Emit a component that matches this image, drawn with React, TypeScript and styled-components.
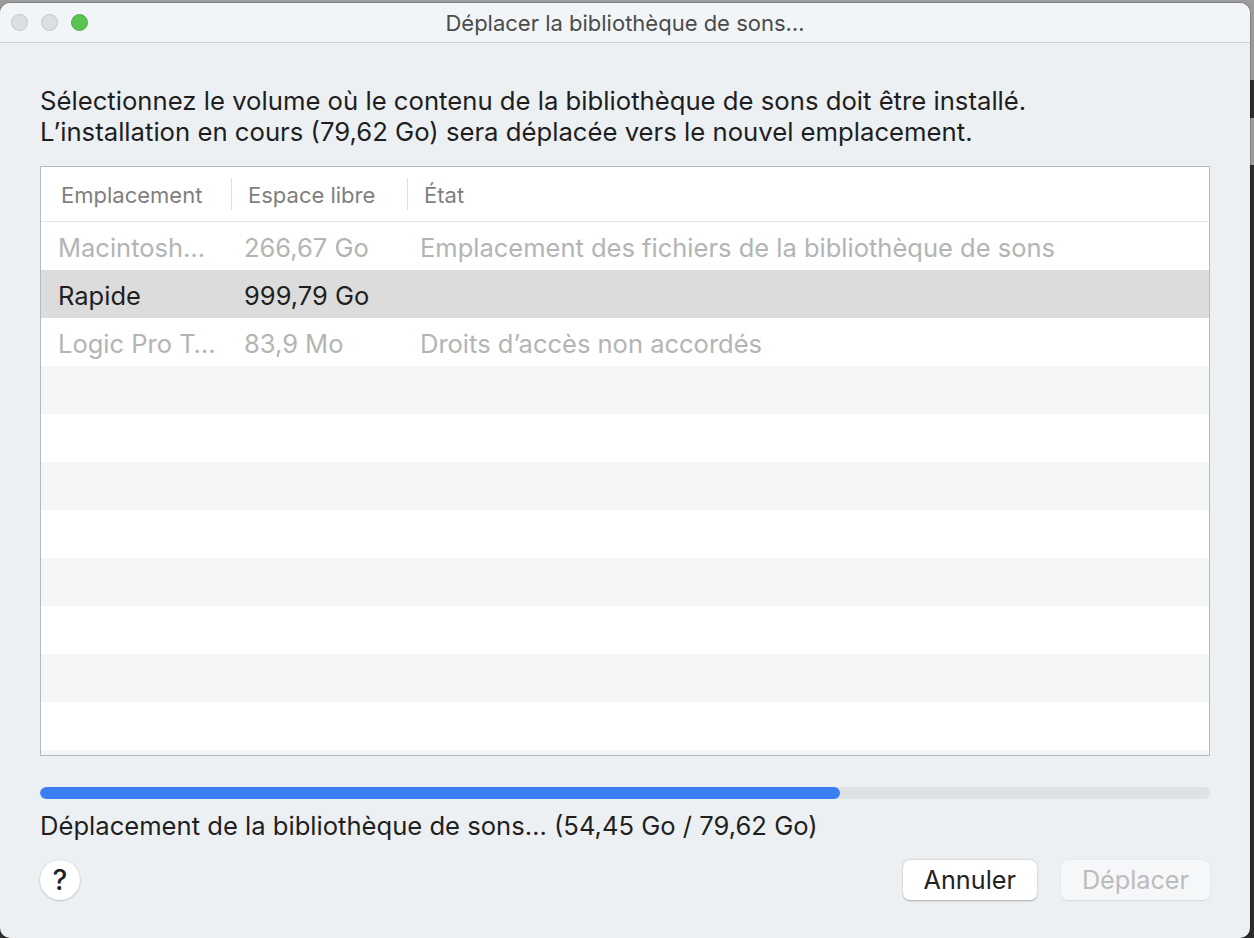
import { createGlobalStyle } from 'styled-components';
import styled from 'styled-components';

const GlobalStyle = createGlobalStyle`
  html, body {
    margin: 0;
    padding: 0;
    width: 1254px;
    height: 938px;
    overflow: hidden;
    background: #2c2c2c;
    font-family: Inter, "Noto Sans", "Liberation Sans", sans-serif;
  }
`;

const Desktop = styled.div`
  width: 1254px;
  height: 938px;
  background: linear-gradient(
    to bottom,
    #9c9c9c 0,
    #9c9c9c 80px,
    #2c2c2c 80px,
    #2c2c2c 118px,
    #9c9c9c 118px,
    #9c9c9c 165px,
    #2c2c2c 165px
  );
  padding-top: 3px;
  box-sizing: border-box;
  overflow: hidden;
`;

const Window = styled.div`
  width: 1250px;
  height: 935px;
  background: #edf0f3;
  border-radius: 10px;
  box-shadow: 0 0 0 1px rgba(0, 0, 0, 0.18);
  overflow: hidden;
  display: flex;
  flex-direction: column;
`;

const TitleBar = styled.div`
  height: 39px;
  flex: none;
  display: flex;
  align-items: center;
  position: relative;
  background: #f2f5f8;
  border-bottom: 1px solid #cfd2d5;
`;

const Lights = styled.div`
  display: flex;
  gap: 13px;
  padding-left: 11px;
`;

const Light = styled.span<{ $on?: boolean }>`
  width: 17px;
  height: 17px;
  border-radius: 50%;
  box-sizing: border-box;
  background: ${(p) => (p.$on ? '#5ac44f' : '#dcdfe2')};
  border: 1px solid ${(p) => (p.$on ? '#4fae45' : '#c4c7ca')};
`;

const Title = styled.div`
  position: absolute;
  left: 0;
  right: 0;
  text-align: center;
  font-size: 22px;
  color: #4b4b4b;
`;

const Content = styled.div`
  padding: 42px 40px 0 40px;
  display: flex;
  flex-direction: column;
  flex: 1;
`;

const Intro = styled.p`
  margin: 0;
  font-size: 25.7px;
  line-height: 31px;
  color: #1e1e1e;
  white-space: nowrap;
`;

const Table = styled.div`
  margin-top: 19px;
  height: 588px;
  border: 1.5px solid #b7babd;
  background: #ffffff;
  overflow: hidden;
  display: flex;
  flex-direction: column;
`;

const Header = styled.div`
  display: grid;
  grid-template-columns: 190px 176px 1fr;
  height: 54px;
  flex: none;
  border-bottom: 1px solid #e4e4e4;
  align-items: center;
`;

const HeadCell = styled.div<{ $sep?: boolean }>`
  font-size: 22px;
  color: #7f7f7f;
  padding-left: ${(p) => (p.$sep ? '16px' : '20px')};
  height: 32px;
  line-height: 34px;
  border-left: ${(p) => (p.$sep ? '1px solid #dedede' : 'none')};
`;

const Row = styled.div<{ $alt?: boolean; $sel?: boolean }>`
  display: grid;
  grid-template-columns: 186px 176px 1fr;
  height: 48px;
  flex: none;
  align-items: center;
  background: ${(p) => (p.$sel ? '#dcdcdc' : p.$alt ? '#f4f5f5' : '#ffffff')};
  color: ${(p) => (p.$sel ? '#1f1f1f' : '#b4b4b4')};
`;

const Cell = styled.div`
  font-size: 25.5px;
  padding: 3px 0 0 17px;
  white-space: nowrap;
  overflow: hidden;
`;

const Progress = styled.div`
  margin-top: 31px;
  height: 12px;
  border-radius: 6px;
  background: #dfe2e5;
  overflow: hidden;
`;

const Fill = styled.div`
  height: 100%;
  border-radius: 6px;
  background: #3a80f2;
`;

const Status = styled.div`
  margin-top: 12px;
  font-size: 25.6px;
  line-height: 30px;
  color: #1f1f1f;
  white-space: nowrap;
`;

const Footer = styled.div`
  margin-top: 19px;
  display: flex;
  align-items: center;
`;

const Help = styled.button`
  width: 40px;
  height: 40px;
  border-radius: 50%;
  border: none;
  background: #ffffff;
  box-shadow: 0 0.5px 2px rgba(0, 0, 0, 0.3);
  font-family: inherit;
  font-size: 28px;
  font-weight: 500;
  color: #222;
  padding: 0;
`;

const Spacer = styled.div`
  flex: 1;
`;

const Button = styled.button<{ $disabled?: boolean }>`
  height: 40px;
  padding: 0 21px;
  border-radius: 7px;
  border: none;
  font-family: inherit;
  font-size: 25.2px;
  background: ${(p) => (p.$disabled ? '#f6f7f9' : '#ffffff')};
  color: ${(p) => (p.$disabled ? '#bcbcbc' : '#222')};
  box-shadow: ${(p) =>
    p.$disabled ? '0 0.5px 1.5px rgba(0,0,0,0.1)' : '0 0.5px 2px rgba(0,0,0,0.3)'};
  margin-left: 24px;
`;

const rows = [
  { name: 'Macintosh…', free: '266,67 Go', state: 'Emplacement des fichiers de la bibliothèque de sons' },
  { name: 'Rapide', free: '999,79 Go', state: '', sel: true },
  { name: 'Logic Pro T…', free: '83,9 Mo', state: 'Droits d’accès non accordés' },
];

export default function App() {
  const empty = Array.from({ length: 9 });
  const done = 54.45 / 79.62;
  return (
    <>
      <GlobalStyle />
      <Desktop>
        <Window>
          <TitleBar>
            <Lights>
              <Light />
              <Light />
              <Light $on />
            </Lights>
            <Title>Déplacer la bibliothèque de sons…</Title>
          </TitleBar>
          <Content>
            <Intro>
              Sélectionnez le volume où le contenu de la bibliothèque de sons doit être installé.
              <br />
              L’installation en cours (79,62 Go) sera déplacée vers le nouvel emplacement.
            </Intro>
            <Table>
              <Header>
                <HeadCell>Emplacement</HeadCell>
                <HeadCell $sep>Espace libre</HeadCell>
                <HeadCell $sep>État</HeadCell>
              </Header>
              {rows.map((r, i) => (
                <Row key={r.name} $alt={i % 2 === 1} $sel={r.sel}>
                  <Cell>{r.name}</Cell>
                  <Cell>{r.free}</Cell>
                  <Cell>{r.state}</Cell>
                </Row>
              ))}
              {empty.map((_, i) => (
                <Row key={i} $alt={(i + 3) % 2 === 1} />
              ))}
            </Table>
            <Progress>
              <Fill style={{ width: `${done * 100}%` }} />
            </Progress>
            <Status>Déplacement de la bibliothèque de sons… (54,45 Go / 79,62 Go)</Status>
            <Footer>
              <Help>?</Help>
              <Spacer />
              <Button>Annuler</Button>
              <Button $disabled>Déplacer</Button>
            </Footer>
          </Content>
        </Window>
      </Desktop>
    </>
  );
}
